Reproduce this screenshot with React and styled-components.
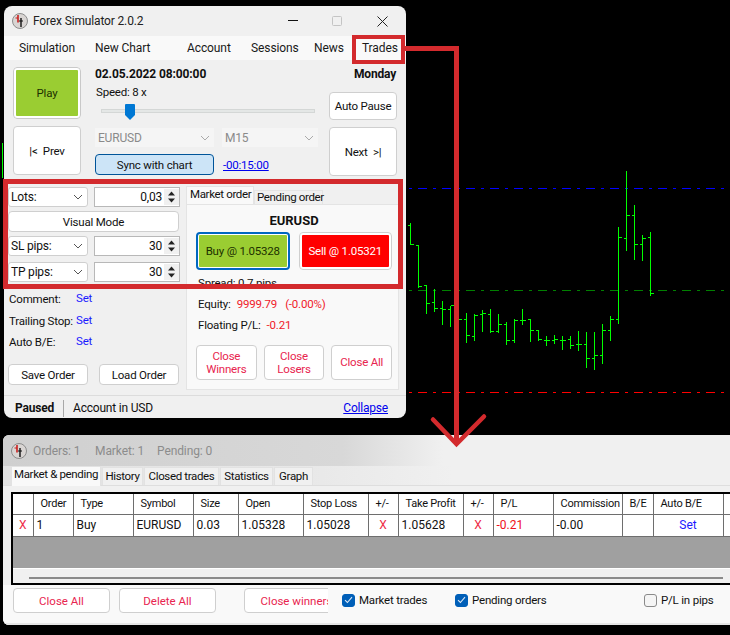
import React from "react";
import styled, { createGlobalStyle } from "styled-components";

const Global = createGlobalStyle`
  html, body { margin: 0; padding: 0; background: #000; }
  body { font-family: Roboto, "Open Sans", sans-serif; font-size: 12px; color: #111; }
  #root { width: 730px; height: 635px; overflow: hidden; }
  * { box-sizing: border-box; }
`;

const FONT = `Roboto, "Open Sans", sans-serif`;
const RED = "#d32a2d";

const Desktop = styled.div`
  position: relative;
  width: 730px;
  height: 635px;
  background: #000;
  overflow: hidden;
`;

const ChartSvg = styled.svg`
  position: absolute;
  left: 0;
  top: 0;
`;

const AnnotationSvg = styled.svg`
  position: absolute;
  left: 0;
  top: 0;
  pointer-events: none;
  z-index: 5;
`;

const Highlight = styled.div`
  position: absolute;
  left: ${(p) => p.$l}px;
  top: ${(p) => p.$t}px;
  width: ${(p) => p.$w}px;
  height: ${(p) => p.$h}px;
  border: ${(p) => p.$b}px solid ${RED};
  z-index: 6;
`;

const MainWindow = styled.div`
  position: absolute;
  left: 4px;
  top: 6px;
  width: 402px;
  height: 412px;
  background: #f0f0f0;
  border-radius: 8px;
  display: flex;
  flex-direction: column;
  overflow: hidden;
  font-family: ${FONT};
  font-size: 11.5px;
  letter-spacing: -0.2px;
`;

const TitleBar = styled.div`
  height: 30px;
  flex: none;
  display: flex;
  align-items: center;
  padding: 0 0 0 8px;
  font-size: 12px;
  letter-spacing: -0.15px;
  color: #222;
`;

const TitleText = styled.span`
  margin-left: 5px;
  flex: 1;
`;

const WinControls = styled.div`
  display: flex;
  align-items: center;
  width: 121px;
  padding-left: 3px;
  flex: none;
  svg { display: block; }
`;

const MenuBar = styled.div`
  height: 24px;
  flex: none;
  background: #f9f9f9;
  display: flex;
  align-items: center;
  font-size: 12px;
  letter-spacing: -0.1px;
  color: #1a1a1a;
`;

const MenuItem = styled.span`
  width: ${(p) => p.$w}px;
  flex: none;
  padding-left: ${(p) => p.$pl || 0}px;
`;

const TopPanel = styled.div`
  display: grid;
  grid-template-columns: 68px minmax(0, 1fr) 68px;
  column-gap: 14px;
  padding: 7px 9px 0 9px;
  height: 115px;
  flex: none;
`;

const SideStack = styled.div`
  display: flex;
  flex-direction: column;
  gap: 7px;
`;

const PlayFrame = styled.button`
  height: 52px;
  padding: 0;
  background: #9acd32;
  border: 3px solid #fff;
  outline: 1px solid #c9c9c9;
  outline-offset: -1px;
  border-radius: 4px;
  font: inherit;
  letter-spacing: inherit;
  color: #1c3000;
`;

const WhiteBtn = styled.button`
  background: #fff;
  border: 1px solid #cfcfcf;
  border-radius: 4px;
  font: inherit;
  letter-spacing: inherit;
  color: #111;
  padding: 0;
  height: ${(p) => p.$h}px;
  width: ${(p) => (p.$w ? p.$w + "px" : "auto")};
  white-space: pre;
  flex: none;
`;

const MidColumn = styled.div`
  display: flex;
  flex-direction: column;
  min-width: 0;
`;

const DateRow = styled.div`
  font-weight: 700;
  font-size: 12px;
  letter-spacing: -0.1px;
  line-height: 14px;
`;

const SpeedLabel = styled.div`
  line-height: 14px;
  margin-top: 4px;
  padding-left: 1px;
`;

const SliderWrap = styled.div`
  height: 20px;
  margin-top: 2px;
  display: flex;
  align-items: center;
  padding-left: 6px;
`;

const SliderTrack = styled.div`
  position: relative;
  width: 214px;
  height: 4px;
  flex: none;
  background: #e4e7e6;
  border: 1px solid #d4d7d6;
`;

const SliderThumb = styled.svg`
  position: absolute;
  left: 23px;
  top: -6px;
`;

const SelectRow = styled.div`
  display: flex;
  gap: 8px;
  margin-top: 7px;
`;

const DisabledSelect = styled.div`
  width: ${(p) => p.$w}px;
  height: 19px;
  flex: none;
  background: #f5f5f5;
  color: #8a8a8a;
  display: flex;
  align-items: center;
  justify-content: space-between;
  padding: 0 4px 0 3px;
  font-size: 12px;
`;

const SyncRow = styled.div`
  display: flex;
  align-items: center;
  gap: 9px;
  margin-top: 7px;
`;

const SyncBtn = styled.button`
  width: 119px;
  height: 21px;
  flex: none;
  background: #cce4f7;
  border: 1px solid #005499;
  border-radius: 4px;
  font: inherit;
  letter-spacing: inherit;
  color: #111;
  padding: 0;
`;

const Link = styled.span`
  color: #0000ee;
  text-decoration: underline;
`;

const RightColumn = styled.div`
  display: flex;
  flex-direction: column;
  align-items: flex-end;
`;

const DayLabel = styled.div`
  font-weight: 700;
  line-height: 14px;
  margin-bottom: 11px;
  padding-right: 1px;
  font-size: 12px;
  white-space: nowrap;
`;

const LowerPanel = styled.div`
  display: grid;
  grid-template-columns: 171px 213px;
  column-gap: 7px;
  padding: 0 0 0 4px;
  height: 211px;
  flex: none;
  margin-top: 4px;
`;

const LeftControls = styled.div`
  display: flex;
  flex-direction: column;
  padding-top: 8px;
`;

const ControlRow = styled.div`
  display: grid;
  grid-template-columns: 80px 86px;
  column-gap: 6px;
  height: 20px;
  margin: ${(p) => p.$mt || 0}px 0 ${(p) => p.$mb || 0}px;
`;

const ComboBox = styled.div`
  background: #fff;
  border: 1px solid #cfcfcf;
  border-radius: 3px;
  display: flex;
  align-items: center;
  justify-content: space-between;
  padding: 0 4px 0 2px;
  font-size: 12px;
`;

const Spinner = styled.div`
  background: #fff;
  border: 1px solid #b8b8b8;
  display: grid;
  grid-template-columns: 1fr 15px;
  align-items: center;
`;

const SpinValue = styled.span`
  text-align: right;
  padding-right: 2px;
  font-size: 12px;
`;

const SpinArrows = styled.div`
  display: flex;
  flex-direction: column;
  gap: 2px;
  align-items: center;
  background: #f0f0f0;
  height: 16px;
  justify-content: center;
  svg { display: block; }
`;

const InfoList = styled.div`
  margin-top: 10px;
  display: flex;
  flex-direction: column;
  gap: 7px;
  padding-left: 1px;
`;

const InfoRow = styled.div`
  display: grid;
  grid-template-columns: 67px 1fr;
  height: 14.7px;
  line-height: 14px;
  white-space: nowrap;
`;

const SetLink = styled.span`
  color: #1a1aff;
  margin-top: -1px;
`;

const SaveRow = styled.div`
  display: flex;
  gap: 11px;
  margin-top: 14px;
`;

const TabsColumn = styled.div`
  display: flex;
  flex-direction: column;
`;

const OrderTabs = styled.div`
  display: flex;
  align-items: flex-end;
  height: 18px;
  margin-top: 7px;
  letter-spacing: -0.35px;
`;

const OrderTab = styled.div`
  height: ${(p) => (p.$active ? 18 : 14)}px;
  width: ${(p) => p.$w}px;
  background: ${(p) => (p.$active ? "#f9f9f9" : "#f0f0f0")};
  border: 1px solid #e4e4e4;
  border-bottom: none;
  padding-left: ${(p) => (p.$active ? 3 : 2)}px;
  line-height: ${(p) => (p.$active ? 14 : 12)}px;
  white-space: nowrap;
`;

const OrderPane = styled.div`
  flex: 1;
  background: #f9f9f9;
  border: 1px solid #e4e4e4;
  padding: 8px 6px 0 9px;
  display: flex;
  flex-direction: column;
`;

const PaneTitle = styled.div`
  font-weight: 700;
  font-size: 13px;
  letter-spacing: 0;
  text-align: center;
  line-height: 16px;
`;

const TradeRow = styled.div`
  display: flex;
  gap: 9px;
  margin-top: 3px;
`;

const TradeBtn = styled.button`
  width: 94px;
  height: 38px;
  padding: 0;
  border-radius: 4px;
  background: ${(p) => p.$bg};
  color: ${(p) => p.$fg};
  border: 3px solid #fff;
  outline: ${(p) => (p.$focus ? "2px solid #0067c0" : "1px solid #cfcfcf")};
  outline-offset: ${(p) => (p.$focus ? "-2px" : "-1px")};
  font: inherit;
  letter-spacing: inherit;
`;

const StatLine = styled.div`
  height: 21px;
  line-height: 15px;
  margin-top: ${(p) => p.$mt || 0}px;
  padding-left: 2px;
  white-space: nowrap;
  display: flex;
`;

const RedVal = styled.span`
  color: #f01a2a;
  margin-left: ${(p) => p.$ml}px;
`;

const CloseRow = styled.div`
  display: flex;
  gap: 7px;
  margin-top: 6px;
`;

const CloseBtn = styled.button`
  width: 61px;
  height: 35px;
  background: #fff;
  border: 1px solid #cfcfcf;
  border-radius: 4px;
  color: #e8254f;
  font: inherit;
  letter-spacing: inherit;
  line-height: 13px;
  padding: 0;
`;

const StatusBar = styled.div`
  flex: 1;
  border-top: 1px solid #dcdcdc;
  margin-top: 5px;
  display: flex;
  align-items: center;
  padding: 2px 18px 0 11px;
  font-size: 12px;
`;

const StatusBold = styled.span`
  font-weight: 700;
  width: 48px;
  font-size: 12px;
`;

const StatusSep = styled.span`
  width: 1px;
  height: 17px;
  background: #a8a8a8;
  margin-right: 9px;
`;

const StatusText = styled.span`
  flex: 1;
`;

const TradesWindow = styled.div`
  position: absolute;
  left: 3px;
  top: 435px;
  width: 740px;
  height: 190px;
  background: #f0f0f0;
  border-radius: 6px 0 0 6px;
  display: flex;
  flex-direction: column;
  overflow: hidden;
  font-family: ${FONT};
  font-size: 12px;
`;

const TradesTitle = styled.div`
  height: 31px;
  flex: none;
  display: flex;
  align-items: center;
  padding-left: 8px;
  color: #8c8c8c;
  font-size: 12px;
  letter-spacing: -0.1px;
  background: linear-gradient(90deg, #cfcfcf 0, #d8d8d8 340px, #f0f0f0 440px);
`;

const TitleCount = styled.span`
  width: ${(p) => p.$w}px;
  flex: none;
  margin-left: ${(p) => p.$ml || 0}px;
`;

const TradesTabs = styled.div`
  height: 20px;
  flex: none;
  display: flex;
  align-items: flex-end;
  padding-left: 8px;
  font-size: 11.5px;
  letter-spacing: -0.35px;
  background: linear-gradient(90deg, #e2e2e2 0, #e8e8e8 300px, #f0f0f0 450px);
  border-bottom: 1px solid #dedede;
`;

const TradesTab = styled.div`
  width: ${(p) => p.$w}px;
  height: ${(p) => (p.$active ? 20 : 18)}px;
  flex: none;
  background: ${(p) => (p.$active ? "#f9f9f9" : "#f0f0f0")};
  border: 1px solid #e2e2e2;
  border-bottom: none;
  text-align: center;
  line-height: ${(p) => (p.$active ? 15 : 17)}px;
  margin-right: 1px;
  white-space: nowrap;
  margin-bottom: ${(p) => (p.$active ? -1 : 0)}px;
`;

const GridFrame = styled.div`
  margin: 6px 0 0 8px;
  height: 93px;
  flex: none;
  border: 2px solid #000;
  border-right: none;
  display: flex;
  flex-direction: column;
  background: #fff;
`;

const DataTable = styled.table`
  border-collapse: collapse;
  table-layout: fixed;
  width: 725px;
  background: #fff;
  flex: none;
  td, th {
    border: 1px solid #6e6e6e;
    border-top: none;
    border-left: none;
    padding: 0 0 0 3px;
    font-weight: 400;
    text-align: left;
    white-space: nowrap;
    overflow: hidden;
    color: #111;
  }
  th { height: 20px; padding-left: 7px; font-size: 11px; letter-spacing: -0.25px; }
  td { height: 22px; }
`;

const RedCell = styled.td`
  && {
    color: ${(p) => (p.$x ? "#ee2b47" : "#f01020")};
    text-align: ${(p) => (p.$x ? "center" : "left")};
    padding: 0 0 0 ${(p) => (p.$x ? 0 : 3)}px;
  }
`;

const BlueCell = styled.td`
  && { color: #1a1aff; text-align: center; padding: 0; }
`;

const GrayFill = styled.div`
  height: 32px;
  flex: none;
  background: #a0a0a0;
  border-bottom: 1px solid #fff;
`;

const ScrollArea = styled.div`
  flex: 1;
  background: #f0f0f0;
  padding: 8px 0 0 16px;
`;

const ScrollThumb = styled.div`
  width: 694px;
  height: 2px;
  background: #8a8a8a;
`;

const BottomRow = styled.div`
  flex: 1;
  display: flex;
  align-items: flex-start;
  position: relative;
  padding: 3px 0 0 10px;
  background: #f9f9f9;
  border-bottom: 2px solid #e6e6e6;
  font-size: 11.5px;
`;

const BottomBtn = styled.button`
  width: ${(p) => p.$w || 97}px;
  height: 25px;
  background: #fff;
  border: 1px solid #cfcfcf;
  border-radius: 4px;
  color: #e8254f;
  font: inherit;
  padding: 0;
  flex: none;
  margin-left: ${(p) => p.$ml || 0}px;
`;

const CheckPanel = styled.div`
  position: absolute;
  left: 325px;
  top: 0;
  width: 410px;
  height: 36px;
  background: #f9f9f9;
  display: flex;
  align-items: center;
  padding: 0 0 6px 14px;
  letter-spacing: -0.2px;
`;

const CheckItem = styled.div`
  display: flex;
  align-items: center;
  gap: 4px;
  width: ${(p) => p.$w}px;
  flex: none;
`;

const CheckBox = styled.span`
  width: 13px;
  height: 13px;
  border-radius: 3px;
  flex: none;
  display: flex;
  align-items: center;
  justify-content: center;
  background: ${(p) => (p.$on ? "#005fb8" : "#f5f5f5")};
  border: 1px solid ${(p) => (p.$on ? "#005fb8" : "#8a8a8a")};
`;

const Logo = () => (
  <svg width="16" height="16" viewBox="0 0 16 16">
    <circle cx="8" cy="8" r="7.5" fill="#d9d5d3" stroke="#8c8c8c" />
    <path d="M6 2V9.5" stroke="#c81e1e" strokeWidth="1.6" />
    <path d="M3.5 5h2.5" stroke="#c81e1e" strokeWidth="1" />
    <path d="M9 5v9" stroke="#111" strokeWidth="1.4" />
    <path d="M7 8h4" stroke="#111" strokeWidth="1" />
  </svg>
);

const Chevron = ({ c = "#555" }) => (
  <svg width="10" height="6" viewBox="0 0 10 6" fill="none">
    <path d="M1 1l4 4 4-4" stroke={c} strokeWidth="1" />
  </svg>
);

const SpinBtns = () => (
  <SpinArrows>
    <svg width="7" height="5" viewBox="0 0 7 5"><path d="M3.5 0.5L7 4.5H0z" fill="#222" /></svg>
    <svg width="7" height="5" viewBox="0 0 7 5"><path d="M0 0.5h7L3.5 4.5z" fill="#222" /></svg>
  </SpinArrows>
);

const Check = () => (
  <svg width="9" height="8" viewBox="0 0 9 8" fill="none">
    <path d="M1 4.2l2.4 2.3L8 1.2" stroke="#dbe9f7" strokeWidth="1.1" />
  </svg>
);

const Z = [
  [31, 6, 73, 15, 73], [55, 76, 200, 76, 197], [79, 193, 278, 196, 250], [103, 205, 272, 247, 265],
  [127, 240, 312, 265, 267], [151, 256, 318, 268, 256], [175, 250, 330, 280, 298], [199, 277, 365, 298, 346],
  [223, 280, 360, 349, 286], [247, 267, 333, 283, 280], [271, 264, 335, 283, 334], [295, 280, 337, 334, 313],
  [319, 304, 372, 313, 361], [343, 295, 365, 361, 300], [367, 264, 312, 301, 301], [391, 298, 362, 298, 330],
  [415, 328, 360, 330, 358], [439, 346, 375, 361, 361], [463, 343, 368, 361, 358], [487, 346, 387, 360, 361],
  [511, 346, 383, 358, 376], [535, 331, 389, 373, 373], [559, 334, 441, 373, 414], [583, 334, 446, 415, 406],
  [607, 310, 428, 406, 331], [631, 286, 360, 331, 298], [655, 18, 308, 298, 52], [679, -150, 90, 55, -15],
  [703, -48, 117, -15, 72], [727, 42, 120, 72, 55], [751, 34, 224, 52, 220],
];

const Chart = () => (
  <ChartSvg width="730" height="635" shapeRendering="crispEdges">
    <path d="M2.5 143V178" stroke="#0f0" />
    {[["#0000ff", 188.5], ["#008000", 290.5], ["#ff0000", 392.5]].map(([c, y]) => (
      <path key={c} d={`M409 ${y}H724`} stroke={c} strokeDasharray="3 6 9 6" />
    ))}
    {Z.map(([x, h, l, o, c]) => {
      const X = Math.round(400 + x / 3 - 0.5) + 0.5;
      const Y = (v) => Math.round(220 + v / 3) + 0.5;
      return (
        <path
          key={x}
          d={`M${X} ${Y(h)}V${Y(l)}M${X - 3} ${Y(o)}H${X}M${X} ${Y(c)}H${X + 3}`}
          stroke="#00ff00"
          fill="none"
        />
      );
    })}
  </ChartSvg>
);

const Annotations = () => (
  <AnnotationSvg width="730" height="635">
    <path d="M405 48.5H456.5V443" stroke={RED} strokeWidth="5" fill="none" />
    <path d="M433 419.5L456.5 444L484 416.5" stroke={RED} strokeWidth="4.5" fill="none" strokeLinecap="round" />
  </AnnotationSvg>
);

const COLS = [20, 40, 60, 60, 45, 65, 65, 30, 65, 30, 60, 69, 31, 70, 20];
const HEAD = ["", "Order", "Type", "Symbol", "Size", "Open", "Stop Loss", "+/-", "Take Profit", "+/-", "P/L", "Commission", "B/E", "Auto B/E", ""];

export default function App() {
  return (
    <Desktop>
      <Global />
      <Chart />

      <MainWindow>
        <TitleBar>
          <Logo />
          <TitleText>Forex Simulator 2.0.2</TitleText>
          <WinControls>
            <svg width="10" height="2" viewBox="0 0 10 2" style={{ marginRight: 34 }}><path d="M0 .5h10" stroke="#111" /></svg>
            <svg width="10" height="10" viewBox="0 0 10 10" style={{ marginRight: 35 }}><rect x=".5" y=".5" width="9" height="9" rx="1" fill="none" stroke="#c4c4c4" /></svg>
            <svg width="11" height="11" viewBox="0 0 11 11"><path d="M.5.5l10 10M10.5.5l-10 10" stroke="#222" /></svg>
          </WinControls>
        </TitleBar>
        <MenuBar>
          <MenuItem $w={91} $pl={15}>Simulation</MenuItem>
          <MenuItem $w={92}>New Chart</MenuItem>
          <MenuItem $w={64}>Account</MenuItem>
          <MenuItem $w={63}>Sessions</MenuItem>
          <MenuItem $w={48}>News</MenuItem>
          <MenuItem $w={44}>Trades</MenuItem>
        </MenuBar>

        <TopPanel>
          <SideStack>
            <PlayFrame>Play</PlayFrame>
            <WhiteBtn $h={49}>{"|<  Prev"}</WhiteBtn>
          </SideStack>
          <MidColumn>
            <DateRow>02.05.2022 08:00:00</DateRow>
            <SpeedLabel>Speed: 8 x</SpeedLabel>
            <SliderWrap>
              <SliderTrack>
                <SliderThumb width="10" height="16" viewBox="0 0 10 16">
                  <path d="M1 0h8a1 1 0 0 1 1 1v10l-5 5-5-5V1a1 1 0 0 1 1-1z" fill="#0078d4" />
                </SliderThumb>
              </SliderTrack>
            </SliderWrap>
            <SelectRow>
              <DisabledSelect $w={119}>EURUSD<Chevron c="#aaa" /></DisabledSelect>
              <DisabledSelect $w={96}>M15<Chevron c="#aaa" /></DisabledSelect>
            </SelectRow>
            <SyncRow>
              <SyncBtn>Sync with chart</SyncBtn>
              <Link>-00:15:00</Link>
            </SyncRow>
          </MidColumn>
          <RightColumn>
            <DayLabel>Monday</DayLabel>
            <SideStack>
              <WhiteBtn $w={68} $h={28}>Auto Pause</WhiteBtn>
              <WhiteBtn $w={68} $h={49}>{"Next  >|"}</WhiteBtn>
            </SideStack>
          </RightColumn>
        </TopPanel>

        <LowerPanel>
          <LeftControls>
            <ControlRow $mb={4}>
              <ComboBox>Lots:<Chevron /></ComboBox>
              <Spinner><SpinValue>0,03</SpinValue><SpinBtns /></Spinner>
            </ControlRow>
            <WhiteBtn $w={171} $h={21}>Visual Mode</WhiteBtn>
            <ControlRow $mt={4} $mb={6}>
              <ComboBox>SL pips:<Chevron /></ComboBox>
              <Spinner><SpinValue>30</SpinValue><SpinBtns /></Spinner>
            </ControlRow>
            <ControlRow>
              <ComboBox>TP pips:<Chevron /></ComboBox>
              <Spinner><SpinValue>30</SpinValue><SpinBtns /></Spinner>
            </ControlRow>
            <InfoList>
              <InfoRow>Comment:<SetLink>Set</SetLink></InfoRow>
              <InfoRow>Trailing Stop:<SetLink>Set</SetLink></InfoRow>
              <InfoRow>Auto B/E:<SetLink>Set</SetLink></InfoRow>
            </InfoList>
            <SaveRow>
              <WhiteBtn $w={80} $h={21}>Save Order</WhiteBtn>
              <WhiteBtn $w={80} $h={21}>Load Order</WhiteBtn>
            </SaveRow>
          </LeftControls>
          <TabsColumn>
            <OrderTabs>
              <OrderTab $active $w={68}>Market order</OrderTab>
              <OrderTab $w={69}>Pending order</OrderTab>
            </OrderTabs>
            <OrderPane>
              <PaneTitle>EURUSD</PaneTitle>
              <TradeRow>
                <TradeBtn $bg="#9acd32" $fg="#1c3000" $focus>Buy @ 1.05328</TradeBtn>
                <TradeBtn $bg="#ff0000" $fg="#fff">Sell @ 1.05321</TradeBtn>
              </TradeRow>
              <StatLine $mt={6}>Spread: 0.7 pips</StatLine>
              <StatLine>Equity:<RedVal $ml={6}>9999.79</RedVal><RedVal $ml={8}>(-0.00%)</RedVal></StatLine>
              <StatLine>Floating P/L:<RedVal $ml={6}>-0.21</RedVal></StatLine>
              <CloseRow>
                <CloseBtn>Close<br />Winners</CloseBtn>
                <CloseBtn>Close<br />Losers</CloseBtn>
                <CloseBtn>Close All</CloseBtn>
              </CloseRow>
            </OrderPane>
          </TabsColumn>
        </LowerPanel>

        <StatusBar>
          <StatusBold>Paused</StatusBold>
          <StatusSep />
          <StatusText>Account in USD</StatusText>
          <Link>Collapse</Link>
        </StatusBar>
      </MainWindow>

      <TradesWindow>
        <TradesTitle>
          <Logo />
          <TitleCount $w={62} $ml={6}>Orders: 1</TitleCount>
          <TitleCount $w={62}>Market: 1</TitleCount>
          <TitleCount $w={80}>Pending: 0</TitleCount>
        </TradesTitle>
        <TradesTabs>
          <TradesTab $active $w={90}>Market &amp; pending</TradesTab>
          <TradesTab $w={41}>History</TradesTab>
          <TradesTab $w={75}>Closed trades</TradesTab>
          <TradesTab $w={53}>Statistics</TradesTab>
          <TradesTab $w={39}>Graph</TradesTab>
        </TradesTabs>
        <GridFrame>
          <DataTable>
            <colgroup>{COLS.map((w, i) => <col key={i} style={{ width: w }} />)}</colgroup>
            <thead>
              <tr>{HEAD.map((h, i) => <th key={i}>{h}</th>)}</tr>
            </thead>
            <tbody>
              <tr>
                <RedCell $x>X</RedCell>
                <td>1</td>
                <td>Buy</td>
                <td>EURUSD</td>
                <td>0.03</td>
                <td>1.05328</td>
                <td>1.05028</td>
                <RedCell $x>X</RedCell>
                <td>1.05628</td>
                <RedCell $x>X</RedCell>
                <RedCell>-0.21</RedCell>
                <td>-0.00</td>
                <td></td>
                <BlueCell>Set</BlueCell>
                <td></td>
              </tr>
            </tbody>
          </DataTable>
          <GrayFill />
          <ScrollArea><ScrollThumb /></ScrollArea>
        </GridFrame>
        <BottomRow>
          <BottomBtn>Close All</BottomBtn>
          <BottomBtn $ml={9}>Delete All</BottomBtn>
          <BottomBtn $ml={28} $w={105}>Close winners</BottomBtn>
          <CheckPanel>
            <CheckItem $w={113}><CheckBox $on><Check /></CheckBox>Market trades</CheckItem>
            <CheckItem $w={189}><CheckBox $on><Check /></CheckBox>Pending orders</CheckItem>
            <CheckItem $w={100}><CheckBox />P/L in pips</CheckItem>
          </CheckPanel>
        </BottomRow>
      </TradesWindow>

      <Annotations />
      <Highlight $l={352} $t={35} $w={53} $h={29} $b={4} />
      <Highlight $l={3} $t={179} $w={400} $h={110} $b={5} />
    </Desktop>
  );
}
